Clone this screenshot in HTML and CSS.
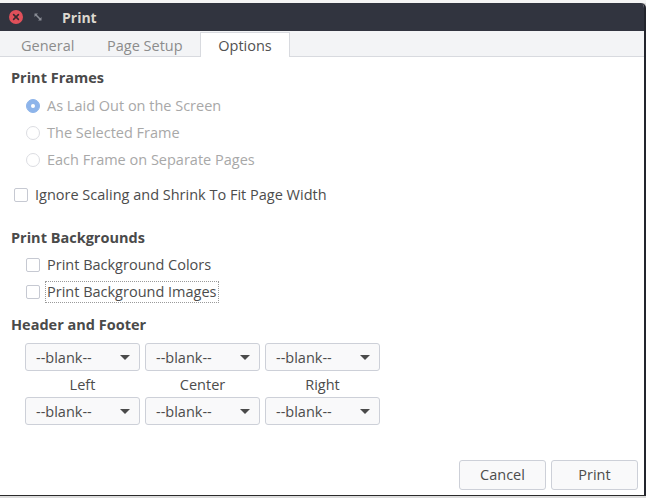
FILE: index.html
```html
<!DOCTYPE html>
<html>
<head>
<meta charset="utf-8">
<link rel="stylesheet" href="styles.css">
</head>
<body>
<div class="window">
  <div class="titlebar">
    <span class="close"><svg width="14" height="14" viewBox="0 0 14 14"><circle cx="7" cy="7" r="7" fill="#e0505a"/><path d="M4.6 4.6L9.4 9.4M9.4 4.6L4.6 9.4" stroke="#3a2a30" stroke-width="1.6" stroke-linecap="round"/></svg></span>
    <span class="mini"><svg width="8" height="8" viewBox="0 0 8 8"><path d="M0.5 0.5L4 0.5L0.5 4Z M7.5 7.5L4 7.5L7.5 4Z" fill="#8a8d96"/><path d="M1.5 1.5L6.5 6.5" stroke="#8a8d96" stroke-width="1.6"/></svg></span>
    <span class="title">Print</span>
  </div>
  <div class="tabs">
    <div class="tab t1">General</div>
    <div class="tab t2">Page Setup</div>
    <div class="tab active">Options</div>
  </div>
  <div class="content">
    <div class="heading h1">Print Frames</div>
    <div class="opt radio-row r1 disabled"><span class="radio checked"></span><span>As Laid Out on the Screen</span></div>
    <div class="opt radio-row disabled"><span class="radio"></span><span>The Selected Frame</span></div>
    <div class="opt radio-row disabled"><span class="radio"></span><span>Each Frame on Separate Pages</span></div>
    <div class="opt check-row top"><span class="check"></span><span>Ignore Scaling and Shrink To Fit Page Width</span></div>
    <div class="heading h2">Print Backgrounds</div>
    <div class="opt check-row indent c1"><span class="check"></span><span>Print Background Colors</span></div>
    <div class="opt check-row indent"><span class="check"></span><span class="focus">Print Background Images</span></div>
    <div class="heading h3">Header and Footer</div>
    <div class="grid">
      <div class="combo"><span>--blank--</span><span class="arrow"></span></div>
      <div class="combo"><span>--blank--</span><span class="arrow"></span></div>
      <div class="combo"><span>--blank--</span><span class="arrow"></span></div>
      <div class="lbl">Left</div>
      <div class="lbl">Center</div>
      <div class="lbl">Right</div>
      <div class="combo"><span>--blank--</span><span class="arrow"></span></div>
      <div class="combo"><span>--blank--</span><span class="arrow"></span></div>
      <div class="combo"><span>--blank--</span><span class="arrow"></span></div>
    </div>
    <div class="buttons">
      <div class="btn">Cancel</div>
      <div class="btn">Print</div>
    </div>
  </div>
</div>
</body>
</html>
```

FILE: styles.css
```css
html, body {
  margin: 0;
  padding: 0;
}
body {
  width: 646px;
  height: 498px;
  background: #dcdcdc;
  font-family: "Open Sans", "Noto Sans", sans-serif;
  font-size: 14.5px;
  color: #4c4c4c;
  overflow: hidden;
}
body::before {
  content: "";
  display: block;
  height: 3px;
  background: #f4f4f4;
}
.window {
  width: 644px;
  height: 492px;
  border-right: 2px solid #23252d;
  border-bottom: 1px solid #2a2a2a;
  background: #fff;
  display: flex;
  flex-direction: column;
  border-top-right-radius: 5px;
  overflow: hidden;
}
.titlebar {
  height: 28px;
  background: #31343f;
  display: flex;
  align-items: center;
  flex-shrink: 0;
}
.close {
  width: 14px;
  height: 14px;
  margin-left: 9px;
  display: flex;
}
.mini {
  margin-left: 11px;
  width: 8px;
  height: 8px;
  display: flex;
}
.title {
  margin-left: 20px;
  color: #dcd8cf;
  font-weight: bold;
  font-size: 14px;
}
.tabs {
  height: 25px;
  background: #f3f4f6;
  border-bottom: 1px solid #d8dadf;
  display: flex;
  align-items: flex-end;
  flex-shrink: 0;
}
.tab {
  height: 24px;
  line-height: 24px;
  color: #8c8c8c;
  margin-bottom: -1px;
  border: 1px solid transparent;
  border-bottom: none;
  box-sizing: border-box;
}
.t1 { width: 89px; padding-left: 20px; }
.t2 { width: 111px; padding-left: 17px; }
.tab.active {
  background: #fff;
  color: #525252;
  border-color: #d8dadf;
  height: 25px;
  line-height: 25px;
  width: 90px;
  text-align: center;
}
.content {
  flex: 1;
  padding: 11px 6px 5px 11px;
  display: flex;
  flex-direction: column;
}
.heading {
  height: 20px;
  line-height: 20px;
  font-weight: bold;
  color: #4a4a4a;
}
.h2 { margin-top: 20px; }
.h3 { margin-top: 10px; }
.opt {
  height: 27px;
  display: flex;
  align-items: center;
}
.r1 { margin-top: 4px; }
.radio-row, .indent { padding-left: 15px; }
.disabled { color: #a8a8a8; }
.radio {
  width: 12px;
  height: 12px;
  border-radius: 50%;
  border: 1px solid #dcdde2;
  margin-right: 7px;
  box-sizing: content-box;
}
.radio.checked {
  background: #8db4ea;
  border-color: #8db4ea;
  position: relative;
}
.radio.checked::after {
  content: "";
  position: absolute;
  left: 4px;
  top: 4px;
  width: 4px;
  height: 4px;
  border-radius: 50%;
  background: #fff;
}
.check {
  width: 12px;
  height: 12px;
  border: 1px solid #c6c9d2;
  border-radius: 2px;
  margin-right: 7px;
  background: #fff;
}
.top { margin-top: 8px; padding-left: 3px; }
.c1 { margin-top: 3px; }
.focus {
  outline: 1px dotted #9a9a9a;
  padding: 0 1px;
  margin-left: -1px;
  line-height: 20px;
}
.grid {
  margin-top: 8px;
  margin-left: 14px;
  display: grid;
  grid-template-columns: 115px 115px 115px;
  column-gap: 5px;
  grid-template-rows: 28px 26px 28px;
  width: 355px;
}
.combo {
  border: 1px solid #cdd0d8;
  border-radius: 3px;
  background: #f9f9fa;
  display: flex;
  align-items: center;
  justify-content: space-between;
  padding: 0 9px 0 10px;
  color: #4c4c4c;
}
.arrow {
  width: 0;
  height: 0;
  border-left: 5px solid transparent;
  border-right: 5px solid transparent;
  border-top: 5px solid #4a4a4a;
}
.lbl {
  text-align: center;
  line-height: 27px;
}
.buttons {
  margin-top: auto;
  display: flex;
  justify-content: flex-end;
  gap: 5px;
}
.btn {
  width: 85px;
  height: 28px;
  border: 1px solid #cdd0d8;
  border-radius: 3px;
  background: #f9f9fa;
  text-align: center;
  line-height: 28px;
}
```
